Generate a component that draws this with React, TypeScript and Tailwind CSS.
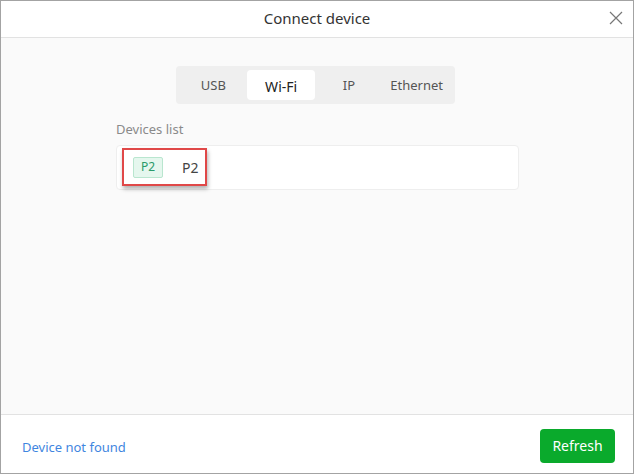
import React from 'react';

const tabs = ['USB', 'Wi-Fi', 'IP', 'Ethernet'];

export default function App() {
  const active = 'Wi-Fi';

  return (
    <div
      className="w-[634px] h-[474px] flex flex-col bg-white border border-[#a3a3a3] overflow-hidden"
      style={{ fontFamily: '"Noto Sans", "Open Sans", sans-serif' }}
    >
      <div className="relative h-[37px] shrink-0 flex items-center justify-center border-b border-[#e2e2e2]">
        <span className="text-[15px] text-[#333] -mt-[2px]">Connect device</span>
        <button className="absolute right-[10px] top-[10px] w-[14px] h-[14px] text-[#777]">
          <svg viewBox="0 0 14 14" width="14" height="14" fill="none" stroke="currentColor" strokeWidth="1.2">
            <path d="M1 1 L13 13 M13 1 L1 13" />
          </svg>
        </button>
      </div>

      <div className="flex-1 bg-[#fafafa] flex flex-col items-center pt-[28px]">
        <div className="flex p-[4px] bg-[#efefef] rounded-[4px] w-[279px] h-[38px] mr-[4px]">
          {tabs.map((t) => (
            <div
              key={t}
              className={
                t === active
                  ? 'flex-1 flex items-center justify-center pt-[2px] rounded-[4px] bg-white text-[14px] text-[#222]'
                  : 'flex-1 flex items-center justify-center pt-[2px] text-[13px] text-[#555]'
              }
            >
              {t}
            </div>
          ))}
        </div>

        <div className="w-[403px] mt-[16px] ml-[1px]">
          <div className="text-[13px] text-[#8a8a8a] leading-[18px]">Devices list</div>
          <div className="mt-[7px] h-[45px] bg-white rounded-[4px] border border-[#eeeeee] flex items-center pl-[5px]">
            <div className="w-[85px] h-[38px] -mt-[1px] border-2 border-[#e04848] shadow-[1px_3px_4px_rgba(0,0,0,0.3)] flex items-center pl-[9px]">
              <span className="h-[21px] w-[30px] flex items-center justify-center text-[12px] text-[#2a9a6a] bg-[#e5f7ee] border border-[#b9e6cf] rounded-[2px]">
                P2
              </span>
              <span className="ml-[19px] text-[14px] text-[#444]">P2</span>
            </div>
          </div>
        </div>
      </div>

      <div className="h-[59px] shrink-0 border-t border-[#e2e2e2] flex items-center justify-between pl-[21px] pr-[18px]">
        <span className="text-[13px] text-[#3f86e0] mt-[7px]">Device not found</span>
        <button className="w-[75px] h-[34px] mt-[3px] rounded-[4px] bg-[#0aaa2c] text-white text-[14px]">Refresh</button>
      </div>
    </div>
  );
}
